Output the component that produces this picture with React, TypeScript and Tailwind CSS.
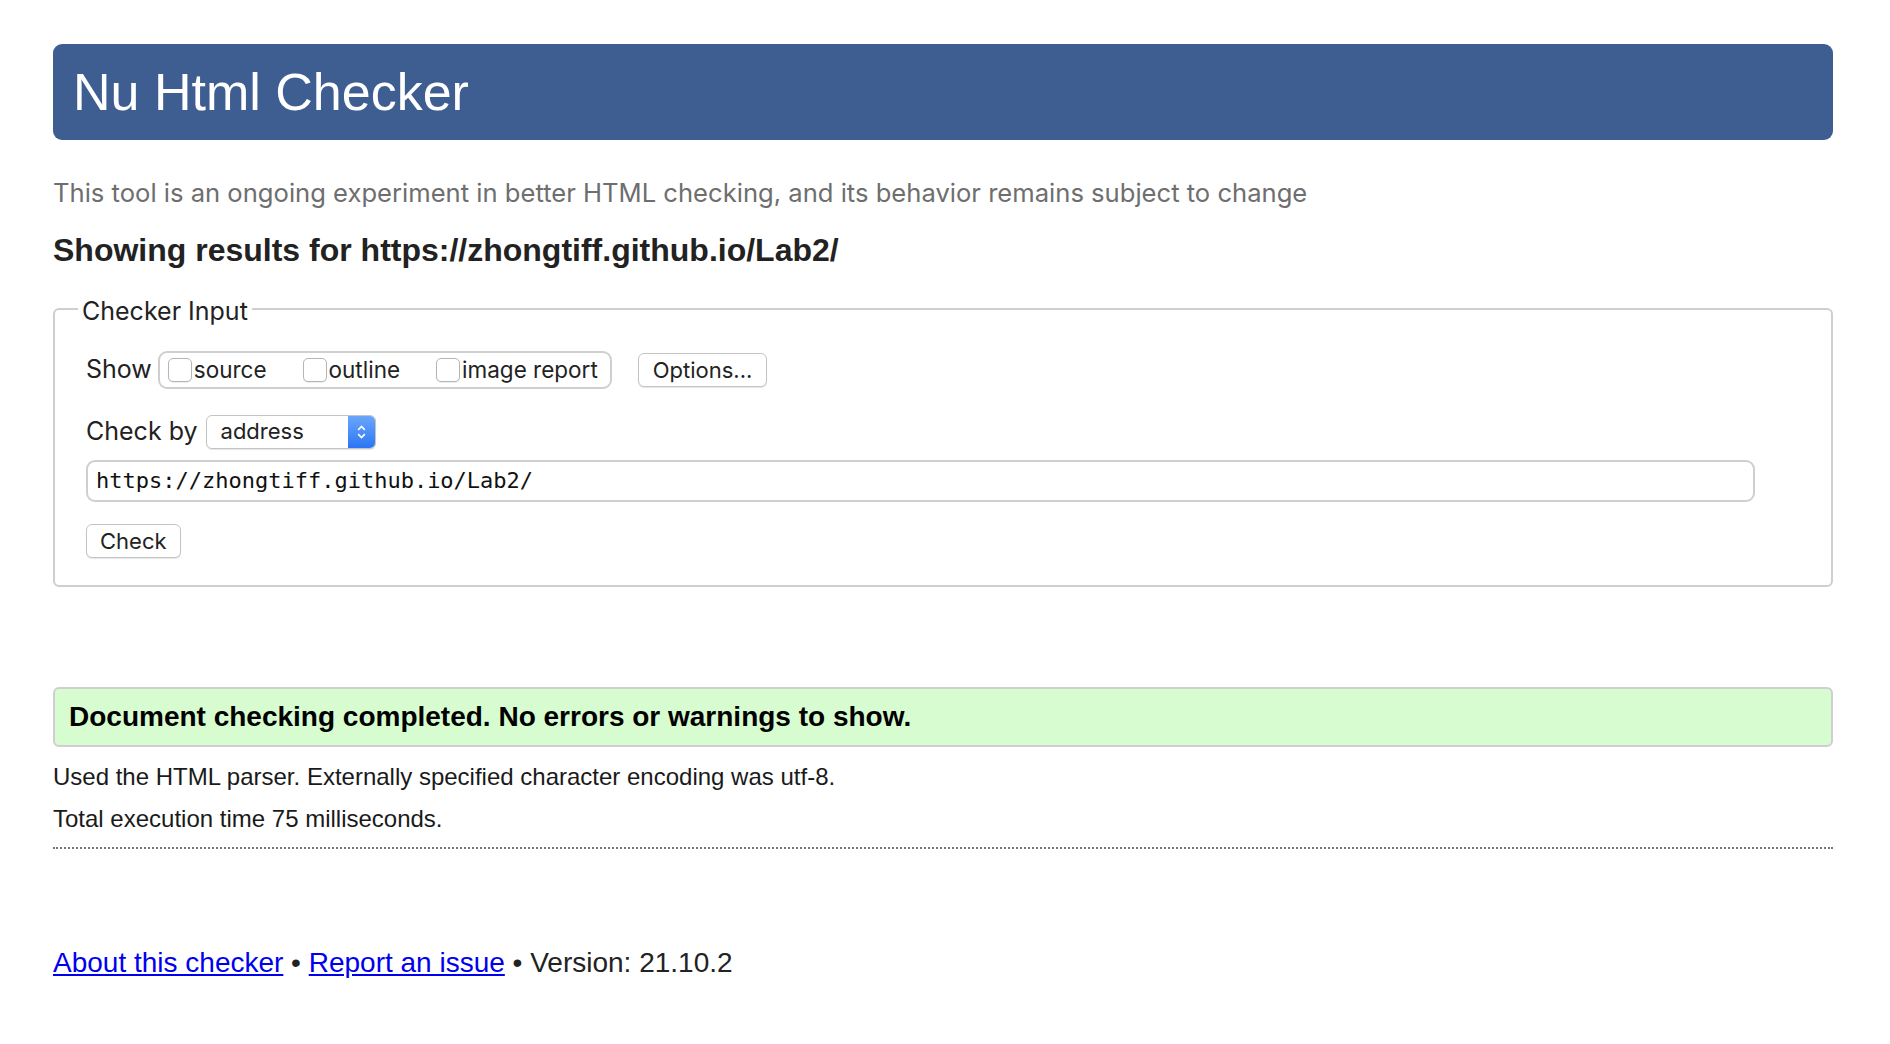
import { useState } from "react";

const sans = "font-['Liberation_Sans',Arial,sans-serif]";
const ui = "font-['Inter','Open_Sans',sans-serif]";

function Checkbox({ label, checked, onChange }: { label: string; checked: boolean; onChange: () => void }) {
  return (
    <label className="flex items-center cursor-pointer">
      <span
        onClick={onChange}
        className={`w-[24px] h-[24px] rounded-[5px] border border-[#b5b5b5] bg-white shadow-[0_1px_1px_rgba(0,0,0,0.08)] flex items-center justify-center ${
          checked ? "bg-[#2f7cf6] border-[#2f7cf6]" : ""
        }`}
      >
        {checked && (
          <svg viewBox="0 0 16 16" className="w-4 h-4 text-white">
            <path d="M3 8.5l3 3 7-7" fill="none" stroke="currentColor" strokeWidth="2" />
          </svg>
        )}
      </span>
      <span className="ml-[2px]">{label}</span>
    </label>
  );
}

export default function App() {
  const [opts, setOpts] = useState({ source: false, outline: false, image: false });
  const [url, setUrl] = useState("https://zhongtiff.github.io/Lab2/");

  return (
    <div className={`${sans} bg-white text-[#1a1a1a] min-h-[1044px] pl-[53px] pr-[57px] pt-[44px]`}>
      <h1 className="bg-[#3e5e91] text-white rounded-[9px] h-[96px] flex items-center pl-[20px] text-[52px] leading-none">
        Nu Html Checker
      </h1>

      <p className={`${ui} text-[#6e6e6e] text-[25.6px] mt-[38px] leading-[30px]`}>
        This tool is an ongoing experiment in better HTML checking, and its behavior remains subject to change
      </p>

      <h2 className="font-bold text-[32px] mt-[24px] leading-[36px] text-[#222]">
        Showing results for https://zhongtiff.github.io/Lab2/
      </h2>

      <fieldset className={`${ui} border-2 border-[#cfcfcf] rounded-[6px] mt-[26px] pl-[31px] pr-[76px] pb-[27px] text-[#222]`}>
        <legend className="text-[25px] px-[4px] ml-[-8px] leading-[30px] translate-y-[2px]">Checker Input</legend>

        <div className="flex items-center mt-[27px] text-[25px]">
          <span className="mr-[6px]">Show</span>
          <div className="flex items-center gap-[36px] h-[38px] border-2 border-[#cfcfcf] rounded-[9px] pl-[8px] pr-[12px] text-[22.5px]">
            <Checkbox label="source" checked={opts.source} onChange={() => setOpts({ ...opts, source: !opts.source })} />
            <Checkbox label="outline" checked={opts.outline} onChange={() => setOpts({ ...opts, outline: !opts.outline })} />
            <Checkbox label="image report" checked={opts.image} onChange={() => setOpts({ ...opts, image: !opts.image })} />
          </div>
          <button
            type="button"
            className="ml-[26px] h-[34px] px-[14px] border border-[#c4c4c4] rounded-[6px] bg-white text-[22px] shadow-[0_1px_1px_rgba(0,0,0,0.1)]"
          >
            Options...
          </button>
        </div>

        <div className="flex items-center mt-[24px] text-[25px]">
          <span className="mr-[8px]">Check by</span>
          <div className="flex h-[34px] w-[170px] border border-[#c4c4c4] rounded-[6px] bg-white shadow-[0_1px_1px_rgba(0,0,0,0.1)] overflow-hidden">
            <span className="flex-1 flex items-center pl-[14px] text-[22px]">address</span>
            <span className="w-[27px] bg-gradient-to-b from-[#6aa6fa] to-[#2a75f3] flex items-center justify-center">
              <svg viewBox="0 0 10 18" className="w-[11px] h-[20px]">
                <path d="M2 7l3-3 3 3M2 11l3 3 3-3" fill="none" stroke="white" strokeWidth="1.6" />
              </svg>
            </span>
          </div>
        </div>

        <input
          value={url}
          onChange={(e) => setUrl(e.target.value)}
          className="block w-full mt-[9px] h-[42px] border-2 border-[#cfcfcf] rounded-[9px] px-[8px] font-['DejaVu_Sans_Mono',monospace] text-[22px] text-[#111] outline-none"
        />

        <button
          type="button"
          className="mt-[22px] h-[34px] px-[13px] border border-[#c4c4c4] rounded-[6px] bg-white text-[22px] shadow-[0_1px_1px_rgba(0,0,0,0.1)]"
        >
          Check
        </button>
      </fieldset>

      <div className="mt-[100px] h-[60px] bg-[#d6fcd0] border-2 border-[#cfcfcf] rounded-[6px] flex items-center pl-[14px] font-bold text-[28px] text-black">
        Document checking completed. No errors or warnings to show.
      </div>

      <p className="text-[24px] mt-[15px] leading-[30px]">Used the HTML parser. Externally specified character encoding was utf-8.</p>
      <p className="text-[24px] mt-[12px] leading-[30px]">Total execution time 75 milliseconds.</p>

      <hr className="mt-[13px] border-0 border-t-2 border-dotted border-[#777]" />

      <div className="mt-[93px] text-[28px] text-[#222]">
        <a href="#" className="text-[#0000ee] underline">About this checker</a>
        {" • "}
        <a href="#" className="text-[#0000ee] underline">Report an issue</a>
        {" • Version: 21.10.2"}
      </div>
    </div>
  );
}
